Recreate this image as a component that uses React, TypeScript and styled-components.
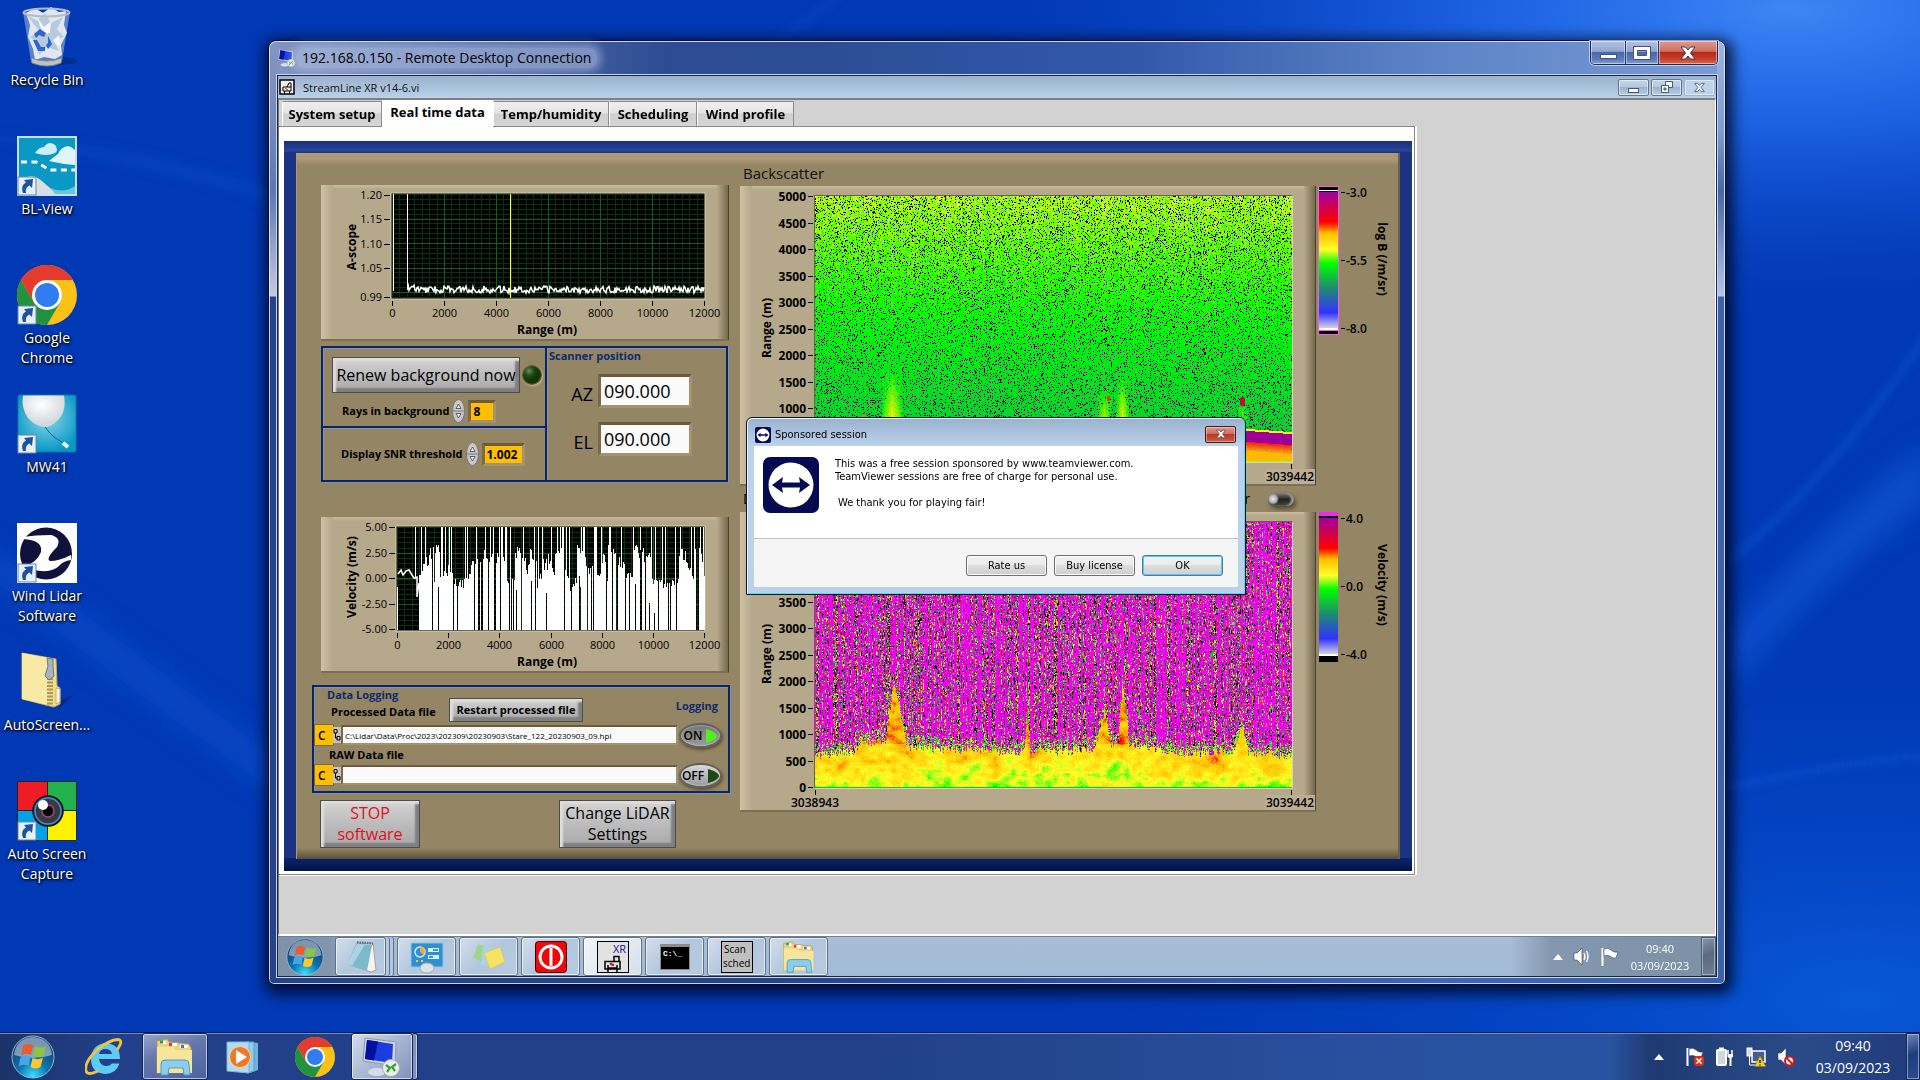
import React, { useEffect, useId, useRef } from "react";
import styled, { createGlobalStyle, css } from "styled-components";

const UI = `"Open Sans", "Noto Sans", sans-serif`;
const SMALL = `"DejaVu Sans Condensed", "DejaVu Sans", sans-serif`;

const GlobalStyle = createGlobalStyle`
  *, *::before, *::after { box-sizing: border-box; }
  body { margin: 0; font-family: ${UI}; overflow: hidden; }
  button, input { font-family: inherit; margin: 0; }
`;

/* ---------- desktop ---------- */

const Desktop = styled.div`
  position: relative;
  display: flex;
  flex-direction: column;
  min-height: 100vh;
  background: #0138b4;
  overflow: hidden;
`;

const WallpaperArt = styled.svg`
  position: absolute;
  inset: 0;
  width: 100%;
  height: 100%;
`;

const IconColumn = styled.nav`
  position: relative;
  flex: 1;
  display: flex;
  flex-direction: column;
  width: 94px;
  padding-top: 7px;
`;

const Shortcut = styled.a`
  display: flex;
  flex-direction: column;
  align-items: center;
  gap: 3px;
  height: 129px;
  font-size: 14px;
  line-height: 20px;
  text-align: center;
  text-decoration: none;
  color: #fff;
  text-shadow: 1px 1px 2px #000, 0 1px 3px #000;
`;

/* ---------- window frame ---------- */

const Frame = styled.main`
  position: absolute;
  inset: 40px 194px 95px 268px;
  display: flex;
  flex-direction: column;
  padding: 0 7px 6px;
  border: 1px solid #060d2c;
  border-radius: 8px 8px 6px 6px;
  background:
    linear-gradient(180deg, #8595c0 0, #7488ba 90px, #5b78b4 150px, #c5cae2 255px, rgba(0, 0, 0, 0) 256px) 0 0 / 8px 100% no-repeat,
    linear-gradient(180deg, #9db4e2 0, #7f9bd2 90px, #4566a8 150px, #b5c5ea 255px, rgba(0, 0, 0, 0) 256px) 100% 0 / 8px 100% no-repeat,
    linear-gradient(90deg, rgba(190, 205, 235, 0.6) 0, rgba(120, 150, 210, 0.1) 400px, rgba(60, 110, 190, 0.2) 60%, rgba(150, 180, 230, 0.7) 100%) 0 0 / 100% 35px no-repeat,
    linear-gradient(90deg, #24438b 0, #24438b 35%, #2c50a0 55%, #3d68b4 80%, #3a62ae 100%);
  box-shadow: inset 0 0 0 1px rgba(225, 235, 255, 0.85), 2px 4px 14px 5px rgba(0, 0, 20, 0.75);
`;

const FrameTitle = styled.header`
  display: flex;
  align-items: center;
  height: 33px;
  padding-left: 2px;
  gap: 6px;
  font-size: 14px;
  color: #000;
`;

const TitleGlow = styled.span`
  flex: none;
  padding: 0 6px;
  margin-left: -6px;
  line-height: 20px;
  border-radius: 8px;
  background: rgba(190, 202, 230, 0.5);
  box-shadow: 0 0 8px 4px rgba(190, 202, 230, 0.5);
`;

const CaptionButtons = styled.div`
  display: flex;
  align-self: flex-start;
  margin-left: auto;
  border: 1px solid #1c2c55;
  border-top: 0;
  border-radius: 0 0 5px 5px;
  overflow: hidden;
  box-shadow: 0 0 0 1px rgba(220, 230, 250, 0.7);
`;

const CaptionButton = styled.button<{ $w: number; $danger?: boolean }>`
  display: grid;
  place-items: center;
  width: ${(p) => p.$w}px;
  height: 23px;
  padding: 0;
  border: 0;
  border-right: 1px solid #26396c;
  background: ${(p) =>
    p.$danger
      ? "linear-gradient(#dd9b92 0, #cf6c5f 45%, #b42a18 50%, #c9402c 80%, #d5705a 100%)"
      : "linear-gradient(#b4c3e2 0, #8fa6d2 45%, #4a69a6 50%, #5a7ab8 80%, #84a2d8 100%)"};
  box-shadow: inset 0 0 0 1px rgba(255, 255, 255, 0.45);
  &:last-child { border-right: 0; }
`;

const Client = styled.div`
  position: relative;
  flex: 1;
  display: flex;
  flex-direction: column;
  border: 1px solid #1b2540;
  outline: 1px solid #c8d4ee;
  outline-offset: 0;
  margin: 1px;
  background: #d2d2d2;
`;

const MdiBar = styled.div`
  display: flex;
  align-items: center;
  gap: 8px;
  height: 22px;
  padding: 0 1px 0 1px;
  background: linear-gradient(#9bb2cd, #b9d1ea);
  font-size: 11px;
  color: #111;
`;

const MdiButton = styled.button<{ $dim?: boolean }>`
  display: grid;
  place-items: center;
  width: 31px;
  height: 17px;
  padding: 0;
  border: 1px solid ${(p) => (p.$dim ? "#9db4cc" : "#66788e")};
  border-radius: 2px;
  background: ${(p) => (p.$dim ? "#bdd3ea" : "linear-gradient(#c3d5e8 0, #b4c9df 48%, #9cb5cf 50%, #b5cde6 100%)")};
  box-shadow: inset 0 0 0 1px rgba(255, 255, 255, 0.5);
`;

const MdiButtons = styled.div`
  display: flex;
  gap: 2px;
  margin-left: auto;
`;

const ViArea = styled.div`
  flex: 1;
  display: flex;
  flex-direction: column;
  align-items: flex-start;
  border-top: 2px solid #808080;
  border-left: 1px solid #777;
  border-right: 1px solid #fff;
  border-bottom: 2px solid #fff;
`;

const Tabs = styled.div`
  position: relative;
  display: flex;
  align-items: flex-end;
  padding-left: 3px;
  height: 26px;
`;

const Tab = styled.button<{ $active?: boolean; $w: number }>`
  width: ${(p) => p.$w}px;
  height: 25px;
  padding: 0;
  border: 1px solid #8c8c8c;
  border-bottom: 0;
  border-left-color: #fff;
  background: linear-gradient(#efefef 0, #e4e4e4 45%, #cfcfcf 50%, #d6d6d6 100%);
  font-size: 13px;
  font-weight: 700;
  line-height: 20px;
  white-space: nowrap;
  color: #000;
  ${(p) =>
    p.$active &&
    css`
      height: 27px;
      margin-bottom: -1px;
      padding-bottom: 4px;
      border-color: #fff;
      background: #fff;
      z-index: 1;
    `}
`;

const TabPage = styled.div`
  padding: 14px 2px 3px 5px;
  border-top: 1px solid #888;
  border-bottom: 1px solid #888;
  border-right: 1px solid #888;
  background: #fff;
  box-shadow: 2px 0 0 #fff, 0 1px 0 #fff;
`;

const BlueFrame = styled.div`
  padding: 12px;
  background:
    linear-gradient(#15307c 0, #2a4696 10px, #17307c 100%) 0 0 / 100% 12px no-repeat,
    linear-gradient(#0c2468, #02154a) 0 100% / 100% 13px no-repeat,
    #1a3382;
`;

const FrontPanel = styled.div`
  display: flex;
  gap: 10px;
  padding: 0 2px 0 16px;
  background:
    linear-gradient(#b09a78 0, #ab9572 60%, #948564 100%) 0 0 / 100% 12px no-repeat,
    linear-gradient(#948564 0, #5b4f38 100%) 0 100% / 100% 11px no-repeat,
    #948564;
  box-shadow: inset 1px 0 0 #a89878, inset -2px 0 0 #6c6046;
`;

const LeftColumn = styled.div`
  display: flex;
  flex-direction: column;
  width: 418px;
  padding: 32px 0 11px;
`;

const RightColumn = styled.div`
  display: grid;
  grid-template-columns: 576px auto;
  grid-template-rows: 33px 300px 26px 300px;
  column-gap: 2px;
`;

const Bevel = styled.div`
  display: grid;
  background:
    linear-gradient(90deg, #cfc1a3, #b6a88b) 0 0 / 12px 100% no-repeat,
    linear-gradient(90deg, #b6a88b, #75694e) 100% 0 / 11px 100% no-repeat,
    linear-gradient(#c8ba9c, #b6a88b) 0 0 / 100% 4px no-repeat,
    #b6a88b;
  border-bottom: 2px solid #7c7054;
  border-right: 1px solid #4c422c;
  & > * { grid-area: 1 / 1; }
`;

const ScopePanel = styled(Bevel)<{ $gap: number }>`
  height: 156px;
  margin: 0 1px ${(p) => p.$gap}px 9px;
`;

const ChartSvg = styled.svg`
  display: block;
  overflow: visible;
  font-family: ${UI};
`;

const HeatCanvas = styled.canvas`
  display: block;
  margin: 9px 0 0 74px;
  border: 1px solid;
  border-color: #6b6148 #ddd2b8 #ddd2b8 #6b6148;
`;

const PanelTitle = styled.h2`
  grid-column: 1 / -1;
  margin: 0;
  padding: 9px 3px 0;
  font-size: 15px;
  font-weight: 400;
  line-height: 22px;
  color: #111;
`;

const ModeRow = styled.label`
  grid-column: 1 / -1;
  display: flex;
  align-items: center;
  gap: 18px;
  padding: 0 0 0 3px;
  font-size: 14px;
  line-height: 20px;
  color: #000;
`;

const ModeText = styled.span`
  width: 507px;
  display: flex;
  justify-content: space-between;
`;

const ToggleSwitch = styled.input`
  appearance: none;
  width: 26px;
  height: 13px;
  border-radius: 7px;
  background: radial-gradient(circle at 5px 6px, #eee 0, #aaa 4px, rgba(0, 0, 0, 0) 6px),
    linear-gradient(#7a7a7a, #222 50%, #444);
  box-shadow: 2px 3px 4px rgba(60, 48, 25, 0.7), inset -3px 0 2px #999;
`;

const BlueBox = styled.section`
  border: 2px solid #0c2560;
  box-shadow: inset 1px 1px 0 #7d93bd, 1px 1px 0 #7d93bd;
  color: #000;
`;

const ControlBox = styled(BlueBox)`
  display: grid;
  grid-template-columns: 224px 1fr;
  height: 136px;
  margin: 0 2px 35px 9px;
`;

const ControlLeft = styled.div`
  display: grid;
  grid-template-rows: 80px 1fr;
  border-right: 2px solid #0c2560;
  box-shadow: 1px 0 0 #7d93bd;
`;

const RenewArea = styled.div`
  display: flex;
  flex-direction: column;
  gap: 6px;
  padding: 9px 0 0 9px;
  border-bottom: 2px solid #0c2560;
  box-shadow: 0 1px 0 #7d93bd;
`;

const SnrArea = styled.div`
  display: flex;
  align-items: center;
  padding: 0 0 0 18px;
`;

const Row = styled.div<{ $gap?: number; $pad?: number }>`
  display: flex;
  align-items: center;
  gap: ${(p) => p.$gap ?? 3}px;
  padding-left: ${(p) => p.$pad ?? 0}px;
`;

const GreyButton = styled.button<{ $size: number; $w: number; $h: number; $red?: boolean; $bold?: boolean }>`
  flex: none;
  width: ${(p) => p.$w}px;
  height: ${(p) => p.$h}px;
  padding: 0;
  border: 1px solid #4c4c4c;
  background: linear-gradient(#d4d4d4, #bcbcbc 50%, #a9a9a9);
  box-shadow: inset 3px 3px 2px #dedede, inset -4px -4px 2px #7f7f7f;
  font-size: ${(p) => p.$size}px;
  font-weight: ${(p) => (p.$bold ? 700 : 400)};
  line-height: 21px;
  color: ${(p) => (p.$red ? "#e01020" : "#000")};
`;

const Led = styled.span`
  width: 18px;
  height: 18px;
  border-radius: 50%;
  background: radial-gradient(circle at 6px 5px, #6d8a5c 0, #1d4a12 5px, #123507 9px);
  box-shadow: 0 0 0 1px #5d5238, 1px 1px 2px 1px #c8b998;
`;

const BoldLabel = styled.label`
  font-size: 11px;
  font-weight: 700;
  line-height: 18px;
  white-space: nowrap;
`;

const Caption = styled.span`
  font-size: 11px;
  font-weight: 700;
  line-height: 16px;
  white-space: nowrap;
  color: #0f2a6c;
`;

const NumField = styled.input<{ $w: number }>`
  width: ${(p) => p.$w}px;
  height: 23px;
  padding: 0 2px;
  border: 3px solid;
  border-color: #6a5b3a #a29370 #a29370 #786a48;
  background: #ffbf00;
  font-size: 12px;
  font-weight: 700;
  color: #000;
`;

const ScannerArea = styled.div`
  display: flex;
  flex-direction: column;
  gap: 6px;
  padding: 0 0 0 2px;
`;

const BigRow = styled.div`
  display: flex;
  align-items: center;
  justify-content: flex-end;
  gap: 5px;
  height: 42px;
  padding-right: 34px;
`;

const BigLabel = styled.label`
  font-size: 18px;
  line-height: 22px;
  padding-top: 5px;
`;

const BigField = styled.input`
  width: 94px;
  height: 34px;
  padding: 0 3px;
  border: 3px solid;
  border-color: #6a5b3a #a29370 #a29370 #786a48;
  background: #fafafa;
  font-size: 18px;
  color: #000;
`;

const LoggingBox = styled(BlueBox)`
  display: grid;
  grid-template-columns: 1fr 46px;
  grid-template-rows: 36px 24px 16px 24px;
  column-gap: 1px;
  height: 108px;
  margin-bottom: 7px;
  padding: 0 3px 0 1px;
`;

const LogHeader = styled.div`
  display: flex;
  gap: 12px;
`;

const LogTitles = styled.div`
  display: flex;
  flex-direction: column;
  padding-left: 12px;
  width: 122px;
  white-space: nowrap;
`;

const HeadButtonSlot = styled.div`
  padding-top: 10px;
`;

const LogCaption = styled.div`
  display: flex;
  justify-content: flex-end;
  padding: 11px 7px 0 0;
`;

const PathRow = styled.div`
  display: flex;
  align-items: center;
`;

const Drive = styled.button`
  width: 18px;
  height: 20px;
  padding: 0 3px;
  border: 0;
  background: #ffbf00;
  font-size: 12px;
  font-weight: 600;
  text-align: left;
  box-shadow: 0 0 0 1px #786a48;
`;

const PathField = styled.input`
  flex: 1;
  min-width: 0;
  height: 20px;
  padding: 0 2px;
  border: 2px solid;
  border-color: #6a5b3a #a29370 #a29370 #786a48;
  background: #fafafa;
  font-size: 8px;
  color: #000;
`;

const PillButton = styled.button<{ $on?: boolean }>`
  display: flex;
  align-items: center;
  justify-content: center;
  gap: 3px;
  width: 43px;
  height: 25px;
  padding: 0;
  border: 2px solid #5f5f5f;
  border-radius: 50%;
  background: ${(p) => (p.$on ? "linear-gradient(#777, #9a9a9a)" : "linear-gradient(#d8d8d8, #9a9a9a)")};
  box-shadow: 1px 2px 3px #5a4e34, inset 0 0 2px #eee;
  font-size: 12px;
  font-weight: 600;
  color: #000;
`;

const BottomButtons = styled.div`
  display: flex;
  gap: 139px;
  padding-left: 8px;
`;

/* ---------- dialog ---------- */

const Dialog = styled.section`
  position: absolute;
  left: 468px;
  top: 341px;
  width: 500px;
  padding: 0 7px 7px;
  border: 1px solid #111820;
  border-radius: 6px 6px 0 0;
  background: linear-gradient(#9ab2ce 0, #bad2eb 28px, #b9d1ea 100%);
  box-shadow: inset 1px 1px 0 #e8f4ff, inset -1px -1px 0 #5cd4f4;
  font-family: ${SMALL};
  font-size: 11px;
  color: #000;
`;

const DialogTitle = styled.header`
  display: flex;
  align-items: center;
  gap: 4px;
  height: 28px;
  padding: 5px 2px 0 1px;
`;

const DialogClose = styled.button`
  display: grid;
  place-items: center;
  width: 31px;
  height: 17px;
  margin: 0 0 1px auto;
  padding: 0;
  border: 1px solid #45191a;
  border-radius: 2px;
  background: linear-gradient(#dc9a90 0, #cf6c5c 45%, #b53a24 50%, #cc5f48 100%);
  box-shadow: inset 0 0 0 1px rgba(255, 255, 255, 0.4);
`;

const DialogBody = styled.div`
  display: flex;
  gap: 16px;
  height: 92px;
  padding: 11px 9px 0;
  background: #fff;
`;

const DialogText = styled.p`
  margin: 0;
  line-height: 13px;
  white-space: pre-line;
`;

const DialogFooter = styled.footer`
  display: flex;
  justify-content: flex-end;
  gap: 7px;
  height: 49px;
  padding: 16px 15px 0 0;
  border-top: 1px solid #c0c0c0;
  background: #f5f5f5;
`;

const DialogButton = styled.button<{ $focus?: boolean }>`
  width: 81px;
  height: 21px;
  padding: 0;
  border: 1px solid ${(p) => (p.$focus ? "#3c7fb1" : "#707070")};
  border-radius: 3px;
  background: linear-gradient(#f2f2f2 0, #ebebeb 48%, #dddddd 50%, #cfcfcf 100%);
  box-shadow: inset 0 0 0 1px ${(p) => (p.$focus ? "#5cc8ee" : "#fcfcfc")};
  font-size: 11px;
  color: #000;
`;

const ThanksLine = styled.span`
  display: block;
  padding: 13px 0 0 3px;
`;

/* ---------- taskbars ---------- */

const InnerTaskbar = styled.div`
  display: flex;
  align-items: stretch;
  height: 40px;
  gap: 3px;
  border-top: 1px solid #6c8098;
  background:
    linear-gradient(90deg, #7e93a8 0, #8196ac 50px, rgba(0, 0, 0, 0) 120px),
    linear-gradient(270deg, #7c90a6 0, #8398ae 165px, rgba(0, 0, 0, 0) 205px),
    linear-gradient(#a8bdd6, #a3bad6);
`;

const OuterTaskbar = styled.footer`
  position: relative;
  display: flex;
  align-items: stretch;
  height: 48px;
  border-top: 1px solid #0a1e52;
  box-shadow: inset 0 1px 0 #6f8cc8;
  background:
    linear-gradient(90deg, #1b3268 0, rgba(0, 0, 0, 0) 110px),
    linear-gradient(90deg, rgba(0, 0, 0, 0) 1610px, #1f3a72 1650px, #2a4b88 1800px, #20397a 100%),
    linear-gradient(90deg, #22408a 0, #22408a 45%, #28509c 70%, #2a56a6 100%);
`;

const Task = styled.button<{ $w: number; $state?: "open" | "active" | "stack"; $ml?: number; $light?: boolean }>`
  display: grid;
  place-items: center;
  width: ${(p) => p.$w}px;
  margin-left: ${(p) => p.$ml ?? 0}px;
  padding: 0;
  border: 1px solid transparent;
  background: none;
  ${(p) =>
    p.$state &&
    css`
      border: 1px solid ${p.$light ? "#5f7388" : "#122555"};
      border-radius: 3px;
      background: ${p.$light
        ? p.$state === "active"
          ? "linear-gradient(135deg, #f2f6fa, #d5dfea)"
          : "linear-gradient(135deg, #d3deeb, #b2c6dd 50%, #b7cae0)"
        : p.$state === "active"
          ? "linear-gradient(135deg, #d4dbea 0, #a9b6d4 50%, #7e90bd 100%)"
          : "linear-gradient(160deg, #98a5c6 0, #6478ad 40%, #4a62a0 100%)"};
      box-shadow: inset 0 0 0 1px rgba(255, 255, 255, 0.6);
    `}
  ${(p) =>
    p.$state === "stack" &&
    css`
      margin-right: 8px;
      box-shadow: inset 0 0 0 1px rgba(255, 255, 255, 0.6), 3px 0 0 #b5c8de, 4px 0 0 #5f7388, 7px 0 0 #b5c8de, 8px 0 0 #5f7388;
    `}
`;

const StackEdge = styled.span`
  width: 5px;
  border: 1px solid #122555;
  border-left: 0;
  border-radius: 0 3px 3px 0;
  background: #7e90bd;
  box-shadow: inset -1px 0 0 #c4cfe6;
`;

const Tray = styled.div<{ $gap: number }>`
  display: flex;
  align-items: center;
  gap: ${(p) => p.$gap}px;
  margin-left: auto;
`;

const Clock = styled.time<{ $size: number; $w: number; $line: number; $pad?: number }>`
  width: ${(p) => p.$w}px;
  padding-left: ${(p) => p.$pad ?? 0}px;
  font-size: ${(p) => p.$size}px;
  line-height: ${(p) => p.$line}px;
  text-align: center;
  white-space: pre-line;
  color: #fff;
`;

const ShowDesktop = styled.button<{ $w: number; $dim?: boolean }>`
  align-self: stretch;
  width: ${(p) => p.$w}px;
  padding: 0;
  border: 1px solid ${(p) => (p.$dim ? "#4d5d6e" : "#142a5c")};
  background: ${(p) => (p.$dim ? "linear-gradient(160deg, #8797a8 0, #5a6b7e 45%, #6d7f94 100%)" : "linear-gradient(160deg, #6f86b8 0, #1f3c7e 45%, #2a4c92 100%)")};
  box-shadow: inset 0 0 0 1px rgba(190, 205, 230, 0.6);
`;

/* ---------- drawings ---------- */

const Wallpaper = () => (
  <WallpaperArt viewBox="0 0 1920 1080" preserveAspectRatio="none" aria-hidden="true">
    <defs>
      <radialGradient id="wpGlow" gradientUnits="userSpaceOnUse" cx="0" cy="0" r="1" gradientTransform="translate(1790 10) scale(900 330)">
        <stop offset="0" stopColor="#3c86f6" />
        <stop offset="0.35" stopColor="#2068e8" stopOpacity="0.85" />
        <stop offset="1" stopColor="#0138b4" stopOpacity="0" />
      </radialGradient>
      <radialGradient id="wpLow" gradientUnits="userSpaceOnUse" cx="0" cy="0" r="1" gradientTransform="translate(1860 1000) scale(900 420)">
        <stop offset="0" stopColor="#0858d8" />
        <stop offset="1" stopColor="#0138b4" stopOpacity="0" />
      </radialGradient>
      <filter id="wpSoft" x="-20%" y="-20%" width="140%" height="140%">
        <feGaussianBlur stdDeviation="14" />
      </filter>
      <filter id="wpFine" x="-20%" y="-20%" width="140%" height="140%">
        <feGaussianBlur stdDeviation="5" />
      </filter>
    </defs>
    <rect width="1920" height="1080" fill="#0138b4" />
    <rect width="1920" height="1080" fill="url(#wpGlow)" />
    <rect width="1920" height="1080" fill="url(#wpLow)" />
    <path d="M-20 540 Q150 660 290 770 L330 830 Q140 700 -20 570Z" fill="#0850cc" opacity="0.7" filter="url(#wpSoft)" />
    <path d="M-10 134 Q140 142 280 192 L280 205 Q140 165 -10 140Z" fill="#0a50c8" opacity="0.35" filter="url(#wpFine)" />
    <path d="M80 212 Q180 218 280 214" stroke="#0a50c8" strokeWidth="3" fill="none" opacity="0.4" filter="url(#wpFine)" />
    <path d="M1725 640 Q1830 520 1930 440 L1930 500 Q1830 570 1725 690Z" fill="#1464e0" opacity="0.5" filter="url(#wpSoft)" />
    <path d="M1730 560 Q1830 480 1930 330" stroke="#1868e0" strokeWidth="5" fill="none" opacity="0.5" filter="url(#wpFine)" />
    <path d="M1720 790 Q1820 765 1930 755" stroke="#1260dc" strokeWidth="4" fill="none" opacity="0.6" filter="url(#wpFine)" />
    <path d="M780 40 L840 -5" stroke="#1a58d4" strokeWidth="6" fill="none" opacity="0.3" filter="url(#wpFine)" />
  </WallpaperArt>
);

const ShortcutArrow = () => (
  <g transform="translate(1 41)">
    <rect width="18" height="18" fill="#e4f0fa" stroke="#6d87a8" />
    <path d="M5 16 C3 10 5 7 8 5.500 L6 3 L15 2 L14 11 L11.500 8.500 C8.500 10 7.500 12 8 16Z" fill="#1f529c" />
  </g>
);

const RecycleBin = () => (
  <svg width="60" height="60" viewBox="0 0 60 60" aria-hidden="true">
    <ellipse cx="40" cy="54" rx="20" ry="4" fill="#02226c" opacity=".5" />
    <path d="M6 5 L53 5 L45 54 Q30 60 14 54Z" fill="#8ea6d8" opacity=".65" />
    <path d="M9 6 L18 1 L26 6 L34 0 L42 5 L49 4 L47 18 L50 26 L44 38 L45 48 L38 52 L27 50 L18 53 L16 42 L11 30 L13 18Z" fill="#dfe8f2" />
    <path d="M10 8 L20 14 L28 6 L34 16 L46 10 L40 22 L47 30 L36 32 L42 44 L30 40 L22 48 L20 36 L13 30 L22 24Z" fill="#b7c9dc" />
    <path d="M20 10 L27 20 L34 14 L33 26 L26 27Z M36 34 L42 28 L43 40Z" fill="#f4f8fc" />
    <path d="M17 27 L23 22 L29 26 L27 30 L22 28 L19 31Z M31 29 L35 37 L31 42 L29 38 L31 36Z M16 33 L20 33 L24 40 L28 40 L28 44 L21 44Z" fill="#2a66cc" />
    <ellipse cx="29.500" cy="5.500" rx="23" ry="4" fill="none" stroke="#b8bcc2" strokeWidth="2" />
    <path d="M14 51 Q30 57 45 51 L44 56 Q30 62 15 56Z" fill="#bfc1c5" stroke="#85888d" />
  </svg>
);

const BlView = () => (
  <svg width="60" height="60" viewBox="0 0 60 60" aria-hidden="true">
    <rect width="60" height="60" fill="#c7dfe8" />
    <rect x="2" y="2" width="56" height="56" fill="#0a98c4" />
    <path d="M18 17 Q22 11 27 11 Q32 4 38 9 Q42 14 38 17 Q30 21 18 17Z" fill="#cdeef6" />
    <path d="M32 25 Q38 20 41 18 Q46 8 54 11 L58 14 L58 29 Q44 28 32 25Z" fill="#dff5fa" />
    <path d="M4 26 L19 26 Q26 30 33 34 L58 34" stroke="#fff" strokeWidth="3" strokeDasharray="6 4.500" fill="none" />
    <path d="M2 46 Q14 34 26 46 L40 58 L2 58Z" fill="#dcdfe2" />
    <path d="M34 52 Q46 58 58 50 L58 58 L38 58Z" fill="#66c6de" />
    <ShortcutArrow />
  </svg>
);

const Chrome = ({ size, link }: { size: number; link?: boolean }) => (
  <svg width={size} height={size} viewBox="0 0 60 60" aria-hidden="true">
    <circle cx="30" cy="30" r="30" fill="#fbc116" />
    <path d="M30 30 L4 15 A30 30 0 0 1 56 15 L30 15Z" fill="#e33b2e" />
    <path d="M4 15 A30 30 0 0 0 30 60 L43 37.500 L30 30 L17 37.500Z" fill="#23923f" />
    <path d="M4 15 L17 37.500 L30 30 L30 15Z" fill="#e33b2e" />
    <circle cx="30" cy="30" r="15" fill="#fff" />
    <circle cx="30" cy="30" r="12" fill="#2f7df0" />
    {link && <ShortcutArrow />}
  </svg>
);

const Mw41 = () => (
  <svg width="60" height="60" viewBox="0 0 60 60" aria-hidden="true">
    <defs>
      <radialGradient id="mwSky" cx=".5" cy=".4" r=".6">
        <stop offset="0" stopColor="#8ad8ee" />
        <stop offset="1" stopColor="#0a98c4" />
      </radialGradient>
      <radialGradient id="mwBall" cx=".45" cy=".3" r=".6">
        <stop offset="0" stopColor="#fff" />
        <stop offset="1" stopColor="#d4d8dc" />
      </radialGradient>
    </defs>
    <rect x="1" y="1" width="58" height="57" rx="2" fill="url(#mwSky)" stroke="#0b7ca6" />
    <path d="M6 1.500 L47 1.500 Q50 18 40 27 Q34 33 27 33 Q18 32 11 24 Q4 14 6 1.500Z" fill="url(#mwBall)" />
    <path d="M28 33 Q36 44 45 48" stroke="#14607a" fill="none" />
    <path d="M46 49 L51 53" stroke="#fff" strokeWidth="4" />
    <ShortcutArrow />
  </svg>
);

const WindLidar = () => (
  <svg width="60" height="60" viewBox="0 0 60 60" aria-hidden="true">
    <rect width="60" height="60" fill="#fff" />
    <circle cx="29" cy="30.500" r="26" fill="#11123c" />
    <path d="M6 14 Q18 12 34 12 Q45 15 40 24 Q28 36 33 38 Q42 38 54 32 L54 37 Q46 38 42 43 Q36 49 24 48 Q14 47 6 44 Q20 40 24 29 Q26 17 6 16Z" fill="#fff" />
    <ShortcutArrow />
  </svg>
);

const ZipFolder = () => (
  <svg width="60" height="60" viewBox="0 0 60 60" aria-hidden="true">
    <path d="M40 50 L58 42 L42 56Z" fill="#02226c" opacity=".6" />
    <path d="M5 1 L39 7 L40 34 L43 36 L43 52 L37 55 L5 47Z" fill="#f2dd86" stroke="#c9ac4e" />
    <path d="M5 1 L32 6 L30 53 L5 47Z" fill="#f8eaa6" />
    <path d="M39 36 L43 37 L43 50 L39 52Z" fill="#f4f6f8" stroke="#c9ac4e" />
    <path d="M33 26 L33 54" stroke="#a89860" strokeWidth="6" strokeDasharray="2 1.500" />
    <path d="M30 6 L36 7 L36 14 L37 24 L32 28 L28 24 L31 14Z" fill="#aab4be" stroke="#6c7680" />
  </svg>
);

const AutoScreen = () => (
  <svg width="60" height="60" viewBox="0 0 60 60" aria-hidden="true">
    <rect width="30" height="30" fill="#ee1c24" />
    <rect x="30" width="30" height="30" fill="#22b14c" />
    <rect y="30" width="30" height="30" fill="#00a2e8" />
    <rect x="30" y="30" width="30" height="30" fill="#fff200" />
    <path d="M30.500 0 V60 M0 29.500 H60 M.5 .5 H59.500 V59.500 H.5Z" stroke="#222" fill="none" />
    <circle cx="31" cy="30" r="15" fill="#3a3a3e" stroke="#111" strokeWidth="1.500" />
    <circle cx="31" cy="30" r="13" fill="none" stroke="#3a8fe0" strokeWidth="1.500" />
    <circle cx="31" cy="30" r="6" fill="#000" stroke="#a040a0" strokeWidth="1.500" />
    <circle cx="26" cy="24" r="5" fill="#fff" />
    <ShortcutArrow />
  </svg>
);

const StartOrb = ({ size }: { size: number }) => {
  const id = useId();
  return (
    <svg width={size} height={size} viewBox="0 0 44 44" aria-hidden="true">
      <defs>
        <radialGradient id={id} cx=".5" cy=".95" r=".8">
          <stop offset="0" stopColor="#3ae0ff" />
          <stop offset=".45" stopColor="#0c74b0" />
          <stop offset="1" stopColor="#18406c" />
        </radialGradient>
      </defs>
      <circle cx="22" cy="22" r="21" fill={`url(#${id})`} stroke="#8fb8d8" />
      <path d="M3 20 Q5 3 22 2 Q39 3 41 20 Q22 26 3 20Z" fill="#dfeaf4" opacity=".5" />
      <path d="M12 11 Q17 7.500 22 10.500 L20 20 Q15 17.500 10 20.500Z" fill="#ee5a2a" />
      <path d="M24 11 Q29 14 35 11 L32.500 20.500 Q27 23.500 22 20.500Z" fill="#8cc63e" />
      <path d="M9.500 22.500 Q14.500 19.500 19.500 22 L17.500 31 Q12 28.500 7.500 31.500Z" fill="#4aa4e8" />
      <path d="M21.500 23 Q27 25.500 32 22.500 L29.500 32 Q24.500 35 19.500 32Z" fill="#fcc82c" />
    </svg>
  );
};

const InternetExplorer = () => (
  <svg width="38" height="38" viewBox="0 0 38 38" aria-hidden="true">
    <path d="M35 21 L14 21 Q15 28 21 28 Q25 28 27 25.500 L34.500 25.500 Q31 36 20.500 36 Q6 35 6 21 Q7 6 21 5 Q35 6 35 21Z M14 16 L27 16 Q26 11 20.500 11 Q15 11 14 16Z" fill="#5ccbf5" fillRule="evenodd" />
    <path d="M32 12 Q39 2 33 1.500 Q24 2 12 12 Q-1 24 1 33 Q3 38 13 33" fill="none" stroke="#f2c43a" strokeWidth="2.800" />
  </svg>
);

const Explorer = ({ size }: { size: number }) => (
  <svg width={size} height={size} viewBox="0 0 40 40" aria-hidden="true">
    <path d="M2 4 L12 2 L14 5 L34 7 L36 11 L36 34 L2 36Z" fill="#ecd47e" stroke="#b8983c" strokeWidth=".8" />
    <path d="M5 4 H11 V7 H5Z M14 6 H22 V9 H14Z M25 8 H33 V11 H25Z" fill="#fff" />
    <path d="M5 3.500 H8 V6.500 H5Z" fill="#2a9a4a" />
    <path d="M14 6 H17 V9 H14Z" fill="#d83a2a" />
    <path d="M26 8 H29 V11 H26Z" fill="#2a7ad8" />
    <path d="M2 10 L18 10 L20 13 L37 13 L37 36 L2 36Z" fill="#f7e59c" />
    <path d="M6 27 Q6 23 10 23 L30 23 Q34 23 34 27 L35 38 L29 38 L28 31 L14 31 L13 38 L6 38Z" fill="#8ccdee" stroke="#4a9cc8" />
  </svg>
);

const MediaPlayer = () => (
  <svg width="34" height="34" viewBox="0 0 34 34" aria-hidden="true">
    <path d="M24 2 L32 3 L32 30 L24 33Z" fill="#6cb4dc" />
    <path d="M21 2 L28 2 L28 31 L21 33Z" fill="#8fcdea" stroke="#5aa0c8" />
    <path d="M1 2 L23 2 L23 33 L1 31Z" fill="#b4dcf0" stroke="#7cb8d8" />
    <circle cx="14" cy="17" r="10.500" fill="#f07824" stroke="#fbd0a8" />
    <path d="M10 10 L21 17 L10 24Z" fill="#fff" />
  </svg>
);

const RemoteIcon = ({ size }: { size: number }) => (
  <svg width={size} height={size} viewBox="0 0 40 40" aria-hidden="true">
    <ellipse cx="15" cy="35" rx="9" ry="4" fill="#d8dce4" />
    <path d="M3 1 L34 5 L33 29 L1 24Z" fill="#cfd6e2" stroke="#8c98ac" />
    <path d="M5 3 L31 7 L30 26 L3 22Z" fill="#1a3ce0" />
    <path d="M5 3 L16 4.500 L12 23.500 L3 22Z" fill="#0410a0" />
    <circle cx="29" cy="31" r="8.500" fill="#eaeeea" stroke="#a8b0a8" />
    <path d="M24 28 L28 31 L25 35 M34 27 L30 30 L33 34" stroke="#3aa03a" strokeWidth="2.200" fill="none" />
  </svg>
);

const Notepad = () => (
  <svg width="32" height="34" viewBox="0 0 32 34" aria-hidden="true">
    <path d="M12 3 L28 4 L31 30 L26 32 L3 24Z" fill="#f4f4f2" stroke="#9c8c78" strokeWidth=".7" />
    <path d="M12 4 L27 5 L22 31 L2 24Z" fill="#7fb9cc" />
    <path d="M12 4 L20 4.500 L7 25.500 L2 24Z" fill="#a7d6e2" />
    <path d="M12 2.500 L28 3.500" stroke="#667" strokeWidth="2.500" strokeDasharray="1.500 1" />
  </svg>
);

const ControlPanel = () => (
  <svg width="34" height="34" viewBox="0 0 34 34" aria-hidden="true">
    <rect x="1" y="3" width="32" height="24" rx="1" fill="#2f8fd4" stroke="#8cc4e8" />
    <circle cx="10" cy="12" r="5" fill="none" stroke="#d8ecf8" strokeWidth="1.500" />
    <path d="M10 12 V6 A6 6 0 0 1 14 15Z" fill="#f6a83a" />
    <path d="M18 10 H29 M18 17 H29" stroke="#d8f4ff" strokeWidth="4" />
    <path d="M23 10 H28 M19 17 H23" stroke="#2aa0d8" strokeWidth="2" />
    <path d="M6 21 H8 M11 21 H13" stroke="#f6c83a" strokeWidth="2" />
    <ellipse cx="17" cy="28" rx="7" ry="5" fill="#dfe3e8" stroke="#a8acb2" />
  </svg>
);

const StickyNotes = () => (
  <svg width="34" height="30" viewBox="0 0 34 30" aria-hidden="true">
    <path d="M6 2 L19 7 L13 21 L1 16Z" fill="#a4d48c" />
    <path d="M11 5 L22 6 L21 25 L9 23Z" fill="#a8d2ee" />
    <path d="M12 11 L28 5 L33 20 L18 27Z" fill="#f6e264" stroke="#dcc648" strokeWidth=".6" />
  </svg>
);

const PowerIcon = () => (
  <svg width="32" height="32" viewBox="0 0 32 32" aria-hidden="true">
    <rect x=".5" y=".5" width="31" height="31" rx="3" fill="#ee0808" stroke="#400" />
    <circle cx="16" cy="16" r="11" fill="none" stroke="#fff" strokeWidth="3" />
    <path d="M16 7 V25" stroke="#fff" strokeWidth="3" />
  </svg>
);

const XrIcon = () => (
  <svg width="32" height="32" viewBox="0 0 32 32" aria-hidden="true">
    <rect x=".5" y=".5" width="31" height="31" fill="#e2e2e2" stroke="#000" />
    <text x="16" y="12" fontSize="11" fontFamily={UI} fill="#10109c">XR</text>
    <path d="M8 20.500 H23 V28 H8Z M17 20 V15.500 H22 V20 M11 24 V31 M20 24 V31 M11 27 H20" fill="none" stroke="#000" strokeWidth="1.500" />
    <path d="M13 22.500 L17 24.500" stroke="#c01818" strokeWidth="2" />
  </svg>
);

const CmdIcon = () => (
  <svg width="30" height="26" viewBox="0 0 30 26" aria-hidden="true">
    <rect width="30" height="26" fill="#8c8c8c" />
    <rect x="1" y="3" width="28" height="22" fill="#000" />
    <text x="3" y="12" fontSize="8" fontWeight="700" fontFamily='"Liberation Mono", monospace' fill="#fff">C:\_</text>
  </svg>
);

const ScanIcon = () => (
  <svg width="32" height="32" viewBox="0 0 32 32" aria-hidden="true">
    <rect x=".5" y=".5" width="31" height="31" fill="#c0c0c0" stroke="#000" />
    <text x="3" y="12" fontSize="10" fontFamily={UI} fill="#000">Scan</text>
    <text x="2" y="26" fontSize="10" fontFamily={UI} fill="#000">sched</text>
  </svg>
);

const ViGlyph = () => (
  <svg width="16" height="16" viewBox="0 0 16 16" aria-hidden="true">
    <rect x="1" y="1" width="14" height="14" fill="#eee" stroke="#000" strokeWidth="1.500" />
    <path d="M4 8 H12 V12 H4Z M8 8 L10 4 H12 V8 M5.500 12 V15 M10.500 12 V15" fill="none" stroke="#000" />
    <path d="M6 9 L9 11" stroke="#c01818" />
  </svg>
);

const Viewer = ({ size }: { size: number }) => (
  <svg width={size} height={size} viewBox="0 0 56 56" aria-hidden="true">
    <rect width="56" height="56" rx="7" fill="#060a50" />
    <circle cx="28" cy="28" r="22.500" fill="#fff" />
    <path d="M9 28 L20 20 L19 25.500 H37 L36 20 L47 28 L36 36 L37 30.500 H19 L20 36Z" fill="#060a50" />
  </svg>
);

const CrossGlyph = ({ size, fill = "#fff" }: { size: number; fill?: string }) => (
  <svg width={size} height={size} viewBox="0 0 16 14" aria-hidden="true">
    <path d="M1 1 H5.500 L8 4 L10.500 1 H15 L10.500 7 L15 13 H10.500 L8 10 L5.500 13 H1 L5.500 7Z" fill={fill} stroke="#4a3c48" />
  </svg>
);

const MinGlyph = ({ w }: { w: number }) => (
  <svg width={w} height="14" viewBox={`0 0 ${w} 14`} aria-hidden="true">
    <rect x=".5" y="8.500" width={w - 1} height="4" fill="#fff" stroke="#4a5470" />
  </svg>
);

const MaxGlyph = () => (
  <svg width="18" height="14" viewBox="0 0 18 14" aria-hidden="true">
    <path d="M.5 .5 H17.500 V13.500 H.5Z M4.500 4.500 V9.500 H13.500 V4.500Z" fill="#fff" stroke="#4a5470" fillRule="evenodd" />
  </svg>
);

const RestoreGlyph = () => (
  <svg width="12" height="12" viewBox="0 0 12 12" aria-hidden="true">
    <path d="M4.500 .5 H11.500 V6.500 H4.500Z" fill="#fff" stroke="#4a5a70" />
    <path d="M.5 4.500 H7.500 V11.500 H.5Z M3 7 V9 H5 V7Z" fill="#fff" stroke="#4a5a70" fillRule="evenodd" />
  </svg>
);

const UpArrow = () => (
  <svg width="10" height="6" viewBox="0 0 10 6" aria-hidden="true">
    <path d="M0 6 L5 0 L10 6Z" fill="#fff" />
  </svg>
);

const FlagIcon = ({ bad }: { bad?: boolean }) => (
  <svg width="18" height="20" viewBox="0 0 18 20" aria-hidden="true">
    <path d="M1.500 1 V19" stroke="#fff" strokeWidth="2" />
    <path d="M3 2 Q7 0 10 3 Q13 6 17 5 L15 11 Q12 12 9 9 Q6 8 3 9Z" fill="#fff" stroke="#33415c" strokeWidth=".6" />
    {bad && (
      <g>
        <rect x="8" y="9" width="10" height="10" rx="3" fill="#d8301c" />
        <path d="M10.500 11.500 L15.500 16.500 M15.500 11.500 L10.500 16.500" stroke="#fff" strokeWidth="1.500" />
      </g>
    )}
  </svg>
);

const BatteryIcon = () => (
  <svg width="20" height="20" viewBox="0 0 20 20" aria-hidden="true">
    <rect x="2" y="3" width="9" height="15" rx="1" fill="#cfd6e0" stroke="#fff" strokeWidth="2" />
    <path d="M4 1.500 H9" stroke="#fff" strokeWidth="2" />
    <path d="M13 3 V7 M17 3 V7" stroke="#fff" strokeWidth="1.500" />
    <path d="M12.500 7 H18 V9.500 Q17 11 15.500 11 Q13 11 12.500 9.500Z" fill="#fff" />
    <path d="M15.500 11 V19" stroke="#fff" strokeWidth="2" />
  </svg>
);

const NetworkIcon = () => (
  <svg width="20" height="20" viewBox="0 0 20 20" aria-hidden="true">
    <path d="M6 4 H19 V15 H6Z M9 18 H15" fill="#4a5f88" stroke="#fff" strokeWidth="1.500" />
    <rect x="1" y="1" width="5" height="8" fill="#ddd" stroke="#fff" />
    <path d="M3.500 9 V18 H9" stroke="#fff" fill="none" />
    <path d="M14 9 L20 19.500 H8.500Z" fill="#f4d020" stroke="#8c7000" strokeWidth=".6" />
    <path d="M14 13 V16 M14 17.500 V18.500" stroke="#000" strokeWidth="1.300" />
  </svg>
);

const SpeakerIcon = ({ muted }: { muted?: boolean }) => (
  <svg width="18" height="20" viewBox="0 0 18 20" aria-hidden="true">
    <path d="M1 6 H4 L9 1 V18 L4 13 H1Z" fill="#fff" stroke="#33415c" strokeWidth=".6" />
    {muted ? (
      <g>
        <circle cx="12.500" cy="14" r="4.500" fill="#fff" stroke="#d01818" strokeWidth="2" />
        <path d="M9.500 11 L15.500 17" stroke="#d01818" strokeWidth="2" />
      </g>
    ) : (
      <path d="M11 6 Q13 9.500 11 13 M13.500 4 Q16.500 9.500 13.500 15" stroke="#fff" strokeWidth="1.300" fill="none" />
    )}
  </svg>
);

const PathGlyph = () => (
  <svg width="8" height="16" viewBox="0 0 8 16" aria-hidden="true">
    <rect width="8" height="16" fill="#c8c4bc" />
    <path d="M1 2.500 H4 V6 H1Z M4 9.500 H7 V13 H4Z M2.500 6 V11 H4" fill="none" stroke="#000" />
  </svg>
);

const PlayGlyph = ({ fill }: { fill: string }) => (
  <svg width="12" height="14" viewBox="0 0 12 14" aria-hidden="true">
    <path d="M1 0 L7 2 Q12 5 12 7 Q12 9 7 12 L1 14Z" fill={fill} />
  </svg>
);

const Spinner = () => (
  <svg width="13" height="24" viewBox="0 0 13 24" aria-hidden="true">
    <ellipse cx="6.500" cy="12" rx="6" ry="11.500" fill="#c8c8c8" stroke="#777" />
    <path d="M1 12 H12" stroke="#777" />
    <path d="M4 9.500 L6.500 5 L9 9.500Z M4 14.500 H9 L6.500 19Z" fill="#eee" stroke="#444" strokeWidth=".8" />
  </svg>
);

/* ---------- data plots ---------- */

const rng = (seed: number) => () => {
  seed = (seed + 0x6d2b79f5) | 0;
  let t = Math.imul(seed ^ (seed >>> 15), 1 | seed);
  t = (t + Math.imul(t ^ (t >>> 7), 61 | t)) ^ t;
  return ((t ^ (t >>> 14)) >>> 0) / 4294967296;
};

type Tick = [string, number];

const ScopeChart = ({
  x0,
  top,
  height,
  width,
  yTicks,
  title,
  titleY,
  majors,
  minor,
  children,
}: {
  x0: number;
  top: number;
  height: number;
  width: number;
  yTicks: Tick[];
  title: string;
  titleY: number;
  majors: number[];
  minor: number;
  children: React.ReactNode;
}) => {
  const rows = Array.from({ length: Math.ceil(height / minor) }, (_, i) => top + i * minor);
  const cols = Array.from({ length: 42 }, (_, i) => x0 + (i * width) / 42);
  return (
    <ChartSvg width="407" height="154" viewBox="0 0 407 154" role="img" aria-label={title}>
      <rect x={x0 - 1} y={top - 1} width={width + 2} height={height + 2} fill="#000" stroke="#d8cdb2" />
      <path d={rows.map((y) => `M${x0} ${Math.round(y) + 0.5}h${width}`).join("") + cols.map((x) => `M${Math.round(x) + 0.5} ${top}v${height}`).join("")} stroke="#0a3210" />
      <path
        d={majors.map((y) => `M${x0} ${y + 0.5}h${width}`).join("") + [1, 2, 3, 4, 5].map((i) => `M${Math.round(x0 + (i * width) / 6) + 0.5} ${top}v${height}`).join("")}
        stroke="#12601c"
      />
      {children}
      {yTicks.map(([label, y]) => (
        <g key={label}>
          <path d={`M${x0 - 8} ${y + 0.5}h6`} stroke="#000" />
          <text x={x0 - 10} y={y + 4} fontSize="11" textAnchor="end">{label}</text>
        </g>
      ))}
      {[0, 2000, 4000, 6000, 8000, 10000, 12000].map((v, i) => {
        const x = Math.round(x0 + (i * width) / 6) + 0.5;
        return (
          <g key={v}>
            <path d={`M${x} ${top + height + 3}v5`} stroke="#000" />
            <text x={x} y={top + height + 19} fontSize="11" textAnchor="middle">{v}</text>
          </g>
        );
      })}
      <text x="226" y={top + height + 36} fontSize="12" fontWeight="700" textAnchor="middle">Range (m)</text>
      <text transform={`translate(35 ${titleY}) rotate(-90)`} fontSize="12" fontWeight="700" textAnchor="middle">{title}</text>
    </ChartSvg>
  );
};

const AScopeTrace = () => {
  const r = rng(7);
  const points: string[] = [];
  for (let x = 86; x <= 383; x++) {
    const base = x < 94 ? 102 : 104.5;
    points.push(`${x} ${(base + (r() - 0.5) * 7).toFixed(1)}`);
  }
  return (
    <g fill="none">
      <path d="M72.5 9V106" stroke="#fff" />
      <path d="M86.500 9V105" stroke="#fff" />
      <path d={"M" + points.join("L")} stroke="#fff" strokeWidth="1.500" />
      <path d="M189.500 9V113" stroke="#ffff40" />
    </g>
  );
};

const VelocityTrace = () => {
  const r = rng(21);
  const bars: string[] = [];
  let level = 60;
  for (let x = 98; x < 384; x++) {
    const k = r();
    if (r() < 0.3) level = 28 + r() * 45;
    if (k < 0.13) continue;
    const full = r() < 0.2;
    const top = full ? 10 : Math.max(28, level + (r() - 0.5) * 14);
    const bottom = k < 0.19 ? top + 20 + r() * 40 : 113;
    bars.push(`M${x + 0.5} ${top.toFixed(0)}V${Math.min(113, bottom).toFixed(0)}`);
  }
  return (
    <g fill="none" stroke="#fff">
      <path d="M76.500 70V113" />
      <path d="M77 57L80 53L82 58L85 54L88 53L91 58L93 61L96 60V80L98 66" strokeWidth="1.500" />
      <path d="M94.500 10V62 M100.500 10V90 M104.500 10V113 M184.500 10V113 M185.500 10V113 M273.500 10V113 M274.500 10V113 M275.500 10V113" />
      <path d={bars.join("")} />
    </g>
  );
};

const STOPS: [number, number, number, number][] = [
  [0, 220, 220, 225],
  [0.12, 50, 50, 255],
  [0.3, 30, 140, 110],
  [0.48, 0, 255, 0],
  [0.58, 255, 255, 40],
  [0.7, 255, 190, 0],
  [0.78, 255, 0, 0],
  [1, 160, 0, 160],
];

const ramp = (t: number): [number, number, number] => {
  for (let i = 1; i < STOPS.length; i++) {
    if (t <= STOPS[i][0]) {
      const a = STOPS[i - 1];
      const b = STOPS[i];
      const k = (t - a[0]) / (b[0] - a[0]);
      return [a[1] + (b[1] - a[1]) * k, a[2] + (b[2] - a[2]) * k, a[3] + (b[3] - a[3]) * k];
    }
  }
  return [160, 0, 160];
};

type Painter = (w: number, h: number) => (x: number, y: number) => [number, number, number];

const backscatter: Painter = (w, h) => {
  const r = rng(99);
  const tint = Array.from({ length: w }, () => (r() - 0.5) * 0.02);
  const plumes = [
    { x: 77, half: 7, top: 172 },
    { x: 289, half: 4, top: 190 },
    { x: 307, half: 3, top: 178 },
    { x: 427, half: 2, top: 205 },
  ];
  return (x, y) => {
    const t = y / h;
    if (Math.hypot((x - 427) / 3, (y - 205) / 5) < 1) return [190, 10, 60];
    if (Math.hypot((x - 293) / 2, (y - 202) / 3) < 1) return [230, 60, 20];
    if (Math.hypot((x - 48) / 2, (y - 221) / 3) < 1) return [240, 120, 20];
    if (x > 425) {
      const edge = 233 + (x - 425) * 0.07;
      if (y > h - 2) return [150, 255, 20];
      if (y > edge + 21) return [255, 190 - r() * 10, 0];
      if (y > edge + 12) return [240, 20 + (y - edge - 12) * 16 + r() * 20, 20];
      if (y > edge + 1) return [158, 0, 150];
      if (y > edge - 1) return [250, 240, 40];
    }
    for (const p of plumes) {
      const d = Math.abs(x - p.x);
      if (y > p.top && d < p.half + 4) {
        const s = ((y - p.top) / 50) * Math.max(0, 1 - d / (p.half + 4));
        if (r() < s * 2 + 0.25) return [Math.min(220, s * 260), 225 + r() * 30, 10];
      }
    }
    if (r() < 0.15 - t * 0.02) return [0, 0, 0];
    const v = t < 0.4 ? 0.545 - t * 0.16 : 0.481 - (t - 0.4) * 0.17;
    return ramp(v + tint[x] + (r() - 0.5) * (t < 0.4 ? 0.09 - t * 0.1 : 0.05));
  };
};

const PROFILE: [number, number][] = [
  [0, 233], [38, 230], [46, 219], [71, 219], [74, 190], [79, 162], [86, 198], [92, 225], [145, 228], [209, 230],
  [212, 186], [215, 230], [278, 228], [289, 190], [296, 222], [303, 222], [307, 158], [314, 222], [375, 232],
  [418, 228], [427, 202], [433, 230], [477, 234],
];

const velocity: Painter = (w, h) => {
  const r = rng(1234);
  const cols = Array.from({ length: w }, () => r());
  const jag = Array.from({ length: w }, () => (r() - 0.5) * 14);
  const above: [number, number, number][] = Array.from({ length: w }, () => [245, 0, 245]);
  const cells = Array.from({ length: 6000 }, () => r());
  const smooth = (x: number, y: number, s: number) => {
    const gx = x / s;
    const gy = y / (s * 0.7);
    const ix = Math.floor(gx);
    const iy = Math.floor(gy);
    const fx = gx - ix;
    const fy = gy - iy;
    const c = (i: number, j: number) => cells[((iy + j) * 97 + ix + i) % 6000];
    return (c(0, 0) * (1 - fx) + c(1, 0) * fx) * (1 - fy) + (c(0, 1) * (1 - fx) + c(1, 1) * fx) * fy;
  };
  const noise = (x: number): [number, number, number] => {
    const c = cols[x];
    const k = r();
    const mag = c < 0.5 ? 0.82 : c < 0.75 ? 0.5 : 0.14;
    if (k < mag) return [245, 0, 245];
    if (k < mag + (1 - mag) * 0.22) return [165, 20, 165];
    if (k < mag + (1 - mag) * 0.46) return [10, 0, 10];
    if (k < mag + (1 - mag) * 0.58) return [190, 170, 150];
    return ramp(0.3 + r() * 0.5);
  };
  return (x, y) => {
    let i = 1;
    while (i < PROFILE.length - 1 && PROFILE[i][0] < x) i++;
    const [ax, ay] = PROFILE[i - 1];
    const [bx, by] = PROFILE[i];
    const edge = ay + ((by - ay) * (x - ax)) / (bx - ax) + jag[x] * 0.6;
    if (y > h - 2) return [20, 200, 20];
    if (y > edge) {
      const n = smooth(x, y, 6) * 0.5 + smooth(x + 40, y + 20, 17) * 0.5;
      const spire = y < 222 ? 0.05 : 0;
      const low = Math.max(0, (y - 236) / 30);
      return ramp(0.52 + n * 0.24 + spire - low * 0.09 + (r() - 0.5) * 0.05);
    }
    if (y > edge - 10 && r() < 0.4) return ramp(0.44 + r() * 0.14);
    if (r() < 0.68 - cols[x] * 0.3) above[x] = r() < 0.45 ? above[x] : noise(x);
    else above[x] = noise(x);
    return above[x];
  };
};

const Heatmap = ({ painter, label }: { painter: Painter; label: string }) => {
  const ref = useRef<HTMLCanvasElement>(null);
  useEffect(() => {
    const canvas = ref.current;
    const ctx = canvas?.getContext("2d");
    if (!canvas || !ctx) return;
    const { width, height } = canvas;
    const image = ctx.createImageData(width, height);
    const paint = painter(width, height);
    for (let y = 0; y < height; y++) {
      for (let x = 0; x < width; x++) {
        const [r, g, b] = paint(x, y);
        const o = (y * width + x) * 4;
        image.data[o] = r;
        image.data[o + 1] = g;
        image.data[o + 2] = b;
        image.data[o + 3] = 255;
      }
    }
    ctx.putImageData(image, 0, 0);
  }, [painter]);
  return <HeatCanvas ref={ref} width={477} height={266} aria-label={label} />;
};

const RangePanel = ({ painter, label }: { painter: Painter; label: string }) => (
  <Bevel>
    <ChartSvg width="575" height="298" viewBox="0 0 575 298" role="img" aria-label={`${label} axes`}>
      <rect x="525" y="283" width="50" height="15" fill="#bcae90" />
      {Array.from({ length: 11 }, (_, i) => {
        const y = Math.round(10 + i * 26.5);
        return (
          <g key={i}>
            <path d={`M68 ${y + 0.5}h5`} stroke="#000" />
            <text x="66" y={y + 5} fontSize="12" fontWeight="700" textAnchor="end">{5000 - i * 500}</text>
          </g>
        );
      })}
      <path d="M75.500 278v5M551.500 278v5" stroke="#000" />
      <text x="75" y="295" fontSize="12" fontWeight="600" textAnchor="middle">3038943</text>
      <text x="550" y="295" fontSize="12" fontWeight="600" textAnchor="middle">3039442</text>
      <text transform="translate(31 142) rotate(-90)" fontSize="12" fontWeight="700" textAnchor="middle">Range (m)</text>
    </ChartSvg>
    <Heatmap painter={painter} label={label} />
  </Bevel>
);

const ColorScale = ({ id, labels, title, magenta }: { id: string; labels: string[]; title: string; magenta?: boolean }) => (
  <ChartSvg width="80" height="152" viewBox="0 0 80 152" role="img" aria-label={`${title} colour scale`}>
    <defs>
      <linearGradient id={id} x1="0" y1="1" x2="0" y2="0">
        {STOPS.map(([o, r, g, b]) => (
          <stop key={o} offset={o} stopColor={`rgb(${r},${g},${b})`} />
        ))}
      </linearGradient>
    </defs>
    <rect x="1" y="0" width="19" height="149" fill={magenta ? "#f028f0" : "#000"} />
    <rect x="1" y={magenta ? 4 : 1} width="19" height="2" fill="#000" />
    {!magenta && <rect x=".5" y=".5" width="20" height="148" fill="none" stroke="#f060e0" />}
    {!magenta && <path d="M1 4.500h19" stroke="#fff" />}
    <rect x="1" y="6" width="19" height="137" fill={`url(#${id})`} />
    <rect x="1" y="142" width="19" height="2" fill="#fff" />
    {magenta ? <rect x="1" y="144" width="19" height="6" fill="#000" /> : <path d="M1 144.500h19" stroke="#f060e0" />}
    {labels.map((l, i) => (
      <g key={l}>
        <path d={`M23 ${6.5 + i * 68}h4`} stroke="#000" />
        <text x="28" y={11 + i * 68} fontSize="12" fontWeight="600">{l}</text>
      </g>
    ))}
    <text transform="translate(60 73) rotate(90)" fontSize="12" fontWeight="700" textAnchor="middle">{title}</text>
  </ChartSvg>
);

/* ---------- page ---------- */

const SHORTCUTS: [string, React.ReactNode][] = [
  ["Recycle Bin", <RecycleBin key="i" />],
  ["BL-View", <BlView key="i" />],
  ["Google Chrome", <Chrome key="i" size={60} link />],
  ["MW41", <Mw41 key="i" />],
  ["Wind Lidar Software", <WindLidar key="i" />],
  ["AutoScreen...", <ZipFolder key="i" />],
  ["Auto Screen Capture", <AutoScreen key="i" />],
];

const TABS: [string, number][] = [
  ["System setup", 100],
  ["Real time data", 111],
  ["Temp/humidity", 116],
  ["Scheduling", 88],
  ["Wind profile", 97],
];

const LabViewPanel = () => (
  <FrontPanel>
    <LeftColumn>
      <ScopePanel $gap={5}>
        <ScopeChart
          x0={71}
          top={9}
          height={104}
          width={312}
          minor={4.9}
          majors={[34, 58, 83, 107]}
          title="A-scope"
          titleY={62}
          yTicks={[["1.20", 10], ["1.15", 34], ["1.10", 59], ["1.05", 83], ["0.99", 112]]}
        >
          <AScopeTrace />
        </ScopeChart>
      </ScopePanel>
      <ControlBox>
        <ControlLeft>
          <RenewArea>
            <Row>
              <GreyButton $size={16} $w={188} $h={36}>Renew background now</GreyButton>
              <Led />
            </Row>
            <Row $pad={10}>
              <BoldLabel htmlFor="rays">Rays in background</BoldLabel>
              <Spinner />
              <NumField id="rays" $w={28} defaultValue="8" />
            </Row>
          </RenewArea>
          <SnrArea>
            <Row>
              <BoldLabel htmlFor="snr">Display SNR threshold</BoldLabel>
              <Spinner />
              <NumField id="snr" $w={43} defaultValue="1.002" />
            </Row>
          </SnrArea>
        </ControlLeft>
        <ScannerArea>
          <Caption>Scanner position</Caption>
          <BigRow>
            <BigLabel htmlFor="az">AZ</BigLabel>
            <BigField id="az" defaultValue="090.000" readOnly />
          </BigRow>
          <BigRow>
            <BigLabel htmlFor="el">EL</BigLabel>
            <BigField id="el" defaultValue="090.000" readOnly />
          </BigRow>
        </ScannerArea>
      </ControlBox>
      <ScopePanel $gap={12}>
        <ScopeChart
          x0={76}
          top={10}
          height={103}
          width={307}
          minor={5.15}
          majors={[36, 61, 87]}
          title="Velocity (m/s)"
          titleY={60}
          yTicks={[["5.00", 10], ["2.50", 36], ["0.00", 61], ["-2.50", 87], ["-5.00", 112]]}
        >
          <VelocityTrace />
        </ScopeChart>
      </ScopePanel>
      <LoggingBox>
        <LogHeader>
          <LogTitles>
            <Caption>Data Logging</Caption>
            <Row $pad={4}>
              <BoldLabel htmlFor="processed">Processed Data file</BoldLabel>
            </Row>
          </LogTitles>
          <HeadButtonSlot>
            <GreyButton $size={11} $w={134} $h={24} $bold>Restart processed file</GreyButton>
          </HeadButtonSlot>
        </LogHeader>
        <LogCaption>
          <Caption>Logging</Caption>
        </LogCaption>
        <PathRow>
          <Drive aria-label="Drive">C</Drive>
          <PathGlyph />
          <PathField id="processed" defaultValue="C:\Lidar\Data\Proc\2023\202309\20230903\Stare_122_20230903_09.hpl" />
        </PathRow>
        <PillButton $on aria-pressed="true">
          ON
          <PlayGlyph fill="#52f01c" />
        </PillButton>
        <Row $pad={14}>
          <BoldLabel htmlFor="raw">RAW Data file</BoldLabel>
        </Row>
        <span />
        <PathRow>
          <Drive aria-label="Drive">C</Drive>
          <PathGlyph />
          <PathField id="raw" defaultValue="" />
        </PathRow>
        <PillButton aria-pressed="false">
          OFF
          <PlayGlyph fill="#1d4a12" />
        </PillButton>
      </LoggingBox>
      <BottomButtons>
        <GreyButton $size={16} $w={100} $h={48} $red>
          STOP
          <br />
          software
        </GreyButton>
        <GreyButton $size={16} $w={117} $h={48}>
          Change LiDAR
          <br />
          Settings
        </GreyButton>
      </BottomButtons>
    </LeftColumn>
    <RightColumn>
      <PanelTitle>Backscatter</PanelTitle>
      <RangePanel painter={backscatter} label="Backscatter" />
      <ColorScale id="scaleB" labels={["-3.0", "-5.5", "-8.0"]} title="log B (/m/sr)" />
      <ModeRow>
        <ModeText>
          <span>D</span>
          <span>r</span>
        </ModeText>
        <ToggleSwitch type="checkbox" />
      </ModeRow>
      <RangePanel painter={velocity} label="Velocity" />
      <ColorScale id="scaleV" labels={["4.0", "0.0", "-4.0"]} title="Velocity (m/s)" magenta />
    </RightColumn>
  </FrontPanel>
);

export default function App() {
  return (
    <Desktop>
      <GlobalStyle />
      <Wallpaper />
      <IconColumn>
        {SHORTCUTS.map(([name, icon]) => (
          <Shortcut key={name} href="#">
            {icon}
            <span>{name}</span>
          </Shortcut>
        ))}
      </IconColumn>
      <Frame>
        <FrameTitle>
          <RemoteIcon size={18} />
          <TitleGlow>192.168.0.150 - Remote Desktop Connection</TitleGlow>
          <CaptionButtons>
            <CaptionButton $w={35} aria-label="Minimize"><MinGlyph w={17} /></CaptionButton>
            <CaptionButton $w={33} aria-label="Maximize"><MaxGlyph /></CaptionButton>
            <CaptionButton $w={58} $danger aria-label="Close"><CrossGlyph size={16} /></CaptionButton>
          </CaptionButtons>
        </FrameTitle>
        <Client>
          <MdiBar>
            <ViGlyph />
            <span>StreamLine XR v14-6.vi</span>
            <MdiButtons>
              <MdiButton aria-label="Minimize panel"><MinGlyph w={11} /></MdiButton>
              <MdiButton aria-label="Restore panel"><RestoreGlyph /></MdiButton>
              <MdiButton $dim aria-label="Close panel"><CrossGlyph size={11} fill="#e4ecf4" /></MdiButton>
            </MdiButtons>
          </MdiBar>
          <ViArea>
            <Tabs role="tablist">
              {TABS.map(([name, w]) => (
                <Tab key={name} role="tab" $w={w} $active={name === "Real time data"} aria-selected={name === "Real time data"}>
                  {name}
                </Tab>
              ))}
            </Tabs>
            <TabPage>
              <BlueFrame>
                <LabViewPanel />
              </BlueFrame>
            </TabPage>
          </ViArea>
          <InnerTaskbar>
            <Task $w={54} aria-label="Start"><StartOrb size={38} /></Task>
            <Task $w={51} $light $state="stack" aria-label="Notepad"><Notepad /></Task>
            <Task $w={59} $light $state="open" aria-label="Control Panel"><ControlPanel /></Task>
            <Task $w={59} $light $state="open" aria-label="Sticky Notes"><StickyNotes /></Task>
            <Task $w={59} $light $state="open" aria-label="Power"><PowerIcon /></Task>
            <Task $w={59} $light $state="active" aria-label="StreamLine XR"><XrIcon /></Task>
            <Task $w={59} $light $state="open" aria-label="Command Prompt"><CmdIcon /></Task>
            <Task $w={59} $light $state="open" aria-label="Scan scheduler"><ScanIcon /></Task>
            <Task $w={59} $light $state="open" aria-label="Explorer"><Explorer size={34} /></Task>
            <Tray $gap={10}>
              <UpArrow />
              <SpeakerIcon />
              <FlagIcon />
              <Clock $size={11} $w={62} $line={17}>{"09:40\n03/09/2023"}</Clock>
              <ShowDesktop $w={15} $dim aria-label="Show desktop" />
            </Tray>
          </InnerTaskbar>
          <Dialog role="dialog" aria-label="Sponsored session">
            <DialogTitle>
              <Viewer size={16} />
              <span>Sponsored session</span>
              <DialogClose aria-label="Close dialog"><CrossGlyph size={10} /></DialogClose>
            </DialogTitle>
            <DialogBody>
              <Viewer size={56} />
              <DialogText>
                {"This was a free session sponsored by www.teamviewer.com.\nTeamViewer sessions are free of charge for personal use."}
                <ThanksLine>We thank you for playing fair!</ThanksLine>
              </DialogText>
            </DialogBody>
            <DialogFooter>
              <DialogButton>Rate us</DialogButton>
              <DialogButton>Buy license</DialogButton>
              <DialogButton $focus>OK</DialogButton>
            </DialogFooter>
          </Dialog>
        </Client>
      </Frame>
      <OuterTaskbar>
        <Task $w={66} aria-label="Start menu"><StartOrb size={44} /></Task>
        <Task $w={60} $ml={8} aria-label="Internet Explorer"><InternetExplorer /></Task>
        <Task $w={66} $ml={8} $state="open" aria-label="Windows Explorer"><Explorer size={40} /></Task>
        <Task $w={66} $ml={2} aria-label="Media Player"><MediaPlayer /></Task>
        <Task $w={66} $ml={6} aria-label="Google Chrome"><Chrome size={40} /></Task>
        <Task $w={62} $ml={3} $state="active" aria-label="Remote Desktop"><RemoteIcon size={40} /></Task>
        <StackEdge />
        <Tray $gap={11}>
          <UpArrow />
          <span />
          <FlagIcon bad />
          <BatteryIcon />
          <NetworkIcon />
          <SpeakerIcon muted />
          <Clock $size={14} $w={89} $pad={5} $line={22}>{"09:40\n03/09/2023"}</Clock>
          <ShowDesktop $w={14} aria-label="Show the desktop" />
        </Tray>
      </OuterTaskbar>
    </Desktop>
  );
}
